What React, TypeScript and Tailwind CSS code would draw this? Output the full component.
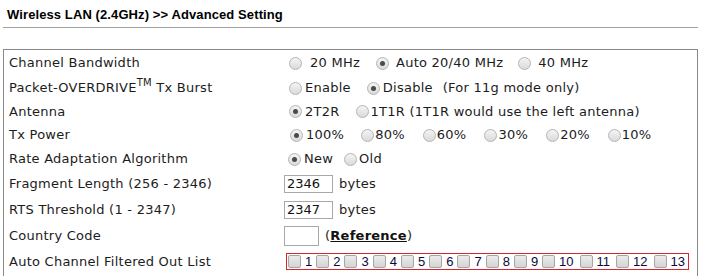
import React from "react";

type Opt = { text: string; checked?: boolean; gap?: number; lead?: number };

const Radio = ({ checked }: { checked?: boolean }) => (
  <span className="inline-flex items-center justify-center w-[13px] h-[13px] shrink-0 rounded-full border border-[#b4b4b4] bg-gradient-to-b from-[#f4f4f4] to-[#dadada]">
    {checked && <span className="block w-[5px] h-[5px] rounded-full bg-[#4a4a4a]" />}
  </span>
);

const Check = () => (
  <span className="inline-block w-[13px] h-[13px] shrink-0 rounded-[2px] border border-[#a6a6a6] bg-gradient-to-b from-[#ececec] to-[#d4d4d4]" />
);

// gap = space before the radio, lead = space between radio and its text
const RadioGroup = ({ opts, note }: { opts: Opt[]; note?: string }) => (
  <div className="flex items-center whitespace-pre">
    {opts.map((o, i) => (
      <React.Fragment key={o.text}>
        <span style={{ marginLeft: o.gap ?? (i === 0 ? 5 : 16) }} className="flex">
          <Radio checked={o.checked} />
        </span>
        <span style={{ marginLeft: o.lead ?? 3 }}>{o.text}</span>
      </React.Fragment>
    ))}
    {note && <span className="ml-[10px]">{note}</span>}
  </div>
);

const TextBox = ({ value, w, h }: { value: string; w: string; h: string }) => (
  <span className={`inline-flex items-center border border-[#a9a9a9] pl-[2px] text-[13px] tracking-normal text-[#111] ${w} ${h}`}>
    {value}
  </span>
);

const rows: { label: React.ReactNode; h: string; value: React.ReactNode }[] = [
  {
    label: "Channel Bandwidth",
    h: "h-[26px]",
    value: (
      <RadioGroup
        opts={[
          { text: "20 MHz", lead: 8 },
          { text: "Auto 20/40 MHz", checked: true, lead: 7 },
          { text: "40 MHz", gap: 15, lead: 7 },
        ]}
      />
    ),
  },
  {
    label: (
      <span>
        Packet-OVERDRIVE<sup className="text-[10px] top-[-6px]">TM</sup> Tx Burst
      </span>
    ),
    h: "h-[24px]",
    value: (
      <RadioGroup
        opts={[{ text: "Enable" }, { text: "Disable", checked: true }]}
        note="(For 11g mode only)"
      />
    ),
  },
  {
    label: "Antenna",
    h: "h-[23px]",
    value: (
      <RadioGroup
        opts={[
          { text: "2T2R", checked: true },
          { text: "1T1R (1T1R would use the left antenna)", lead: 2 },
        ]}
      />
    ),
  },
  {
    label: "Tx Power",
    h: "h-[24px]",
    value: (
      <RadioGroup
        opts={[
          { text: "100%", checked: true, gap: 6 },
          { text: "80%", gap: 17, lead: 1 },
          { text: "60%", gap: 18, lead: 1 },
          { text: "30%", gap: 18, lead: 1 },
          { text: "20%", gap: 18, lead: 1 },
          { text: "10%", gap: 18, lead: 1 },
        ]}
      />
    ),
  },
  {
    label: "Rate Adaptation Algorithm",
    h: "h-[24px]",
    value: (
      <RadioGroup
        opts={[
          { text: "New", checked: true, gap: 4, lead: 3 },
          { text: "Old", gap: 11, lead: 2 },
        ]}
      />
    ),
  },
  {
    label: "Fragment Length (256 - 2346)",
    h: "h-[26px]",
    value: (
      <div className="flex items-center">
        <TextBox value="2346" w="w-[49px]" h="h-[18px]" />
        <span className="ml-[6px]">bytes</span>
      </div>
    ),
  },
  {
    label: "RTS Threshold (1 - 2347)",
    h: "h-[26px]",
    value: (
      <div className="flex items-center">
        <TextBox value="2347" w="w-[49px]" h="h-[18px]" />
        <span className="ml-[6px]">bytes</span>
      </div>
    ),
  },
  {
    label: "Country Code",
    h: "h-[26px]",
    value: (
      <div className="flex items-center">
        <TextBox value="" w="w-[35px]" h="h-[20px]" />
        <span className="ml-[6px]">
          (<a className="font-bold underline text-[#111]">Reference</a>)
        </span>
      </div>
    ),
  },
  {
    label: "Auto Channel Filtered Out List",
    h: "h-[25px]",
    value: (
      <div className="ml-[2px] inline-flex items-center h-[17px] border border-[#d9262b] pl-[1px] pr-[3px] font-['Liberation_Sans',Arial,sans-serif] text-[13px] tracking-normal text-[#0a0a3a]">
        {Array.from({ length: 13 }, (_, i) => i + 1).map((n) => (
          <span key={n} className={`flex items-center ${n === 1 ? "" : n > 10 ? "ml-[6px]" : "ml-[4px]"}`}>
            <Check />
            <span className="ml-[4px] leading-none">{n}</span>
          </span>
        ))}
      </div>
    ),
  },
];

export default function App() {
  return (
    <div className="w-[701px] h-[276px] overflow-hidden bg-white px-[3px] font-['DejaVu_Sans',Verdana,sans-serif] text-[13px] tracking-[0.25px] text-[#1c1c1c]">
      <div className="h-[28px] border-b border-[#a0a0a0] pl-[4px] pt-[5px] font-['Liberation_Sans',Arial,sans-serif] text-[13px] font-bold tracking-[0.1px] text-black">
        Wireless LAN (2.4GHz) &gt;&gt; Advanced Setting
      </div>
      <div className="mt-[21px] border border-[#8a8a8a] pb-[10px]">
        {rows.map((r, i) => (
          <div key={i} className={`grid grid-cols-[280px_1fr] ${r.h}`}>
            <div className="flex items-center pl-[5px] whitespace-nowrap">{r.label}</div>
            <div className="flex items-center">{r.value}</div>
          </div>
        ))}
      </div>
    </div>
  );
}
